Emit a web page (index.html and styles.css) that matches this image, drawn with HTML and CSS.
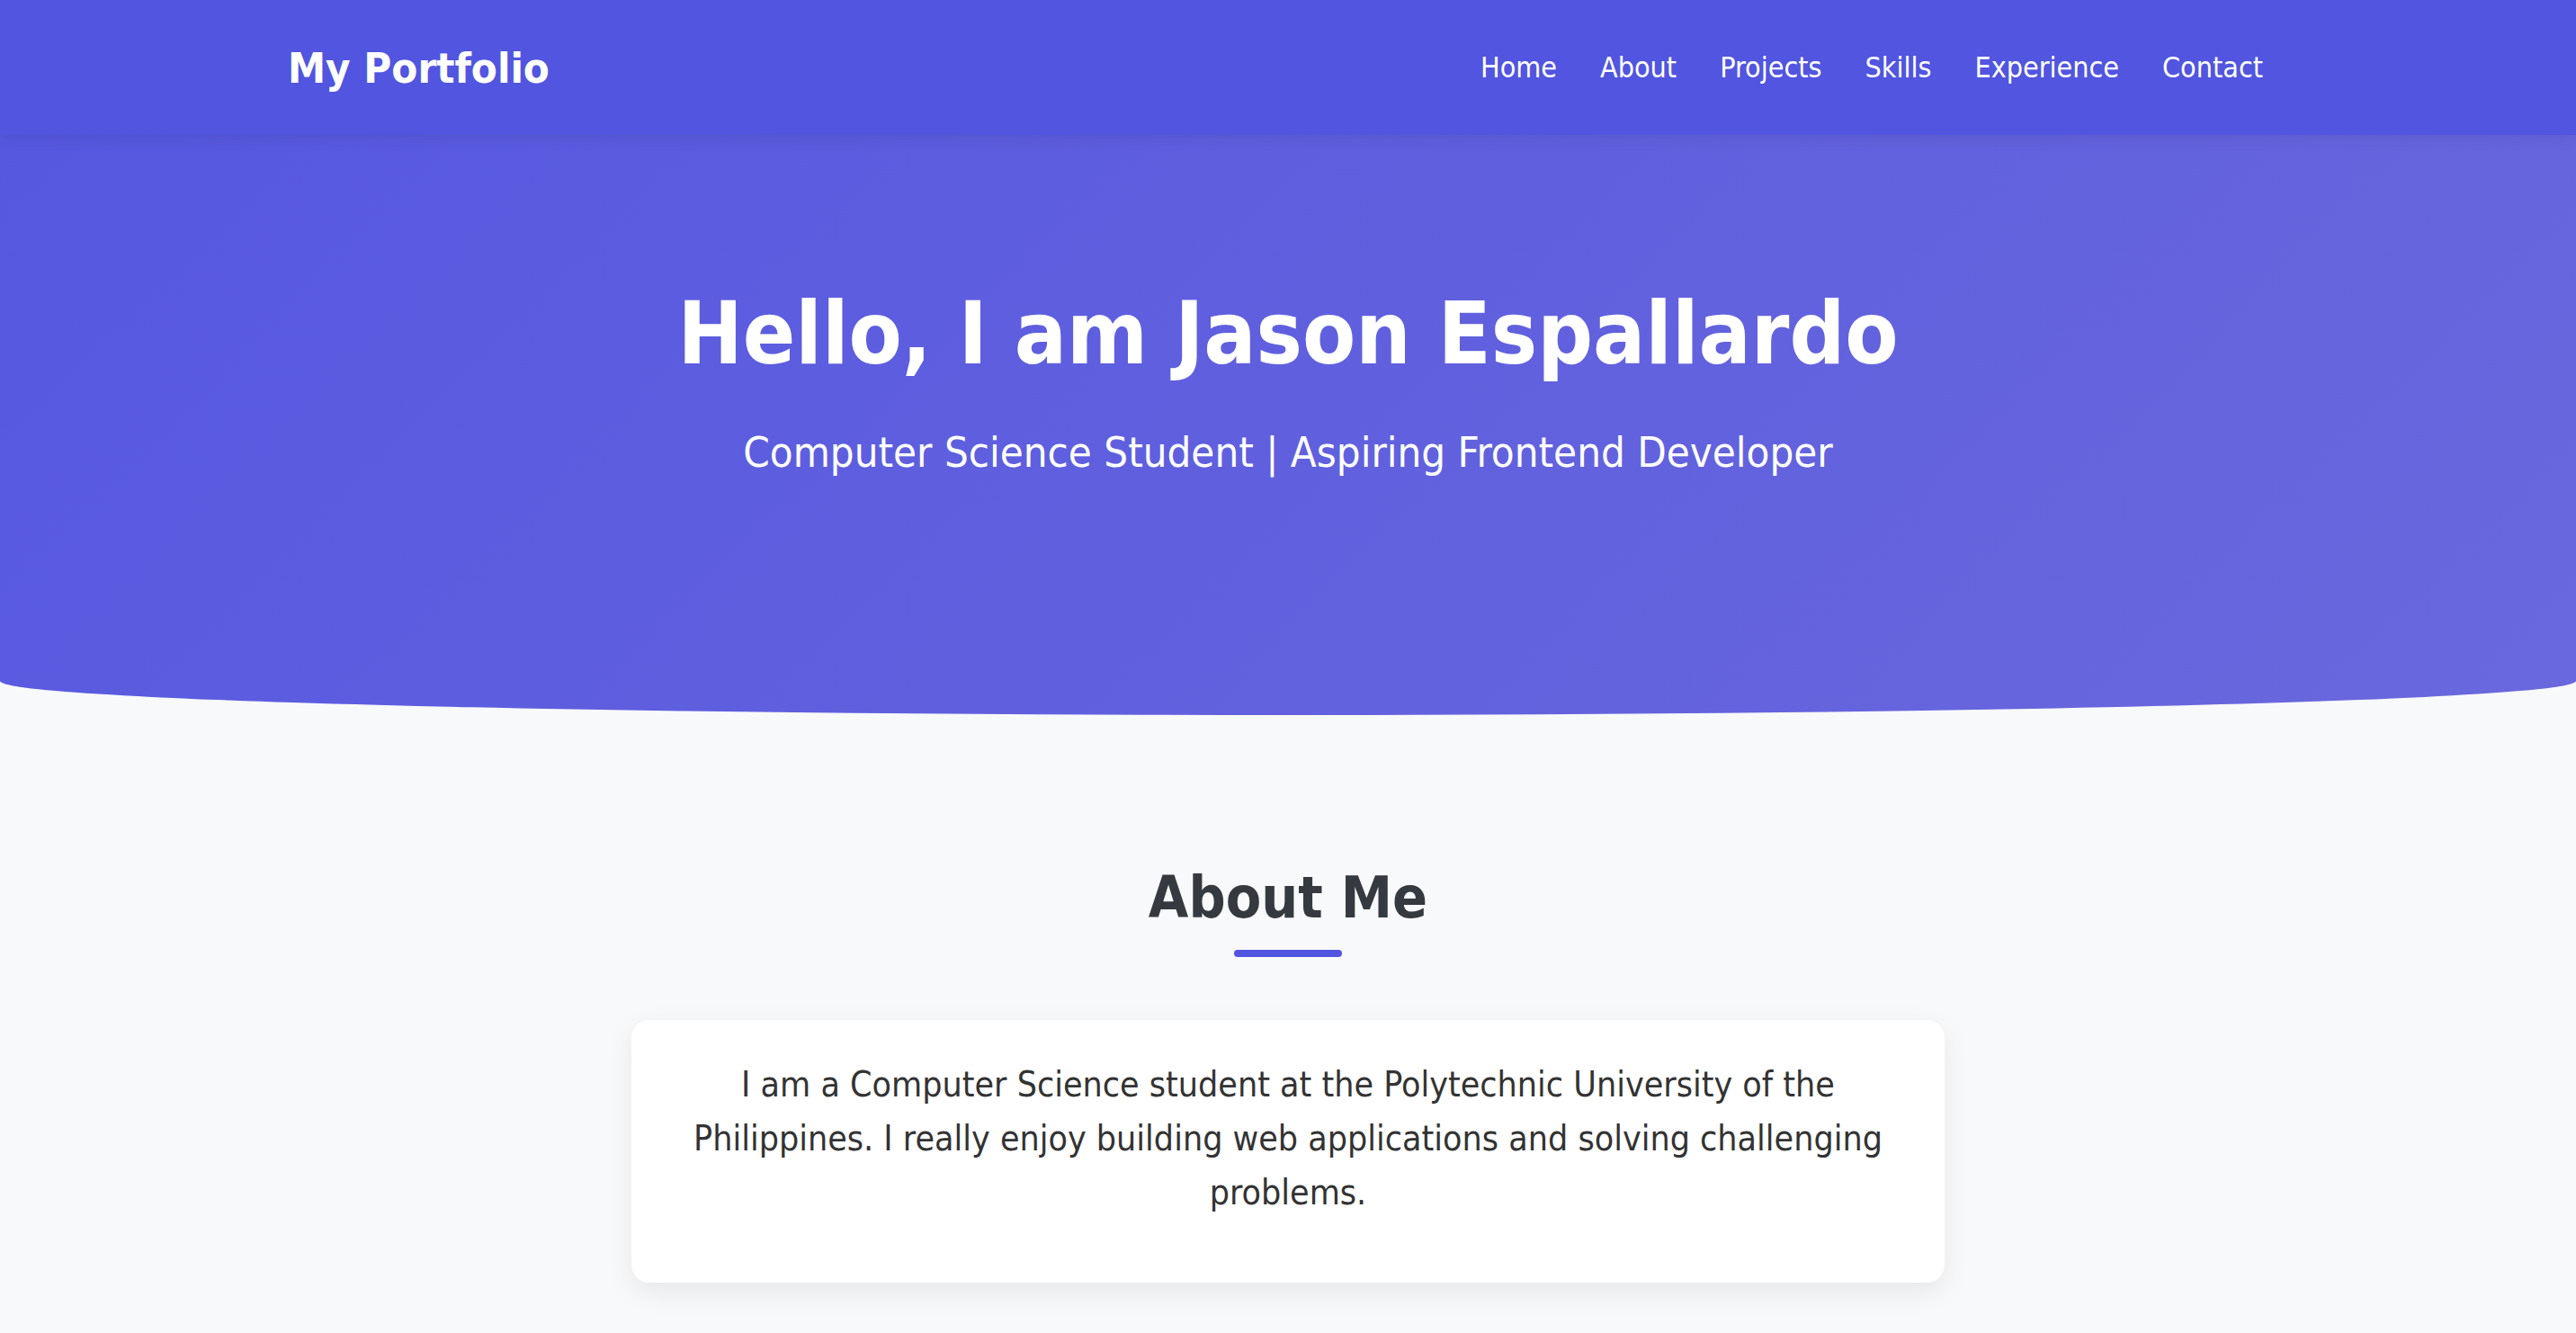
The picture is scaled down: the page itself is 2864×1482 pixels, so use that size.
FILE: index.html
```html
<!DOCTYPE html>
<html lang="en">
<head>
<meta charset="UTF-8">
<title>My Portfolio</title>
<link rel="stylesheet" href="styles.css">
</head>
<body>
<header class="navbar">
  <div class="container nav-inner">
    <a class="logo" href="#">My Portfolio</a>
    <nav class="nav-links">
      <a href="#home">Home</a>
      <a href="#about">About</a>
      <a href="#projects">Projects</a>
      <a href="#skills">Skills</a>
      <a href="#experience">Experience</a>
      <a href="#contact">Contact</a>
    </nav>
  </div>
</header>
<section class="hero" id="home">
  <h1 class="hero-title">Hello, I am Jason Espallardo</h1>
  <p class="hero-subtitle">Computer Science Student | Aspiring Frontend Developer</p>
</section>
<section class="about" id="about">
  <h2 class="section-title">About Me</h2>
  <div class="about-card">
    <p>I am a Computer Science student at the Polytechnic University of the Philippines. I really enjoy building web applications and solving challenging problems.</p>
  </div>
</section>
</body>
</html>
```
FILE: styles.css
```css
* { box-sizing: border-box; }
html, body { margin: 0; padding: 0; }
body {
  font-family: "DejaVu Sans Condensed", "DejaVu Sans", Verdana, sans-serif;
  background: #f8f9fa;
  color: #333;
  min-height: 100vh;
}
.navbar {
  background: #5155df;
  height: 150px;
  box-shadow: 0 4px 16px rgba(0, 0, 0, 0.08);
  position: relative;
  z-index: 2;
}
.container {
  width: 2216px;
  margin: 0 auto;
}
.nav-inner {
  height: 100%;
  display: flex;
  align-items: center;
  justify-content: space-between;
}
.logo {
  color: #fff;
  text-decoration: none;
  font-weight: bold;
  font-size: 47px;
  margin-left: -4px;
}
.nav-links {
  display: flex;
  gap: 48px;
  padding-right: 24px;
}
.nav-links a {
  color: #fff;
  text-decoration: none;
  font-size: 32px;
}
.hero {
  background: linear-gradient(135deg, #5658e0 0%, #6a68dd 100%);
  color: #fff;
  text-align: center;
  padding: 163px 0 263px;
  border-radius: 0 0 50% 50% / 0 0 38px 38px;
}
.hero-title {
  margin: 0;
  font-size: 96px;
  line-height: 116px;
  font-weight: bold;
}
.hero-subtitle {
  margin: 45px 0 0;
  font-size: 47px;
  line-height: 58px;
}
.about {
  padding: 163px 0 60px;
}
.section-title {
  margin: 0 0 70px;
  text-align: center;
  font-size: 64px;
  line-height: 80px;
  color: #343a40;
  font-weight: bold;
}
.section-title::after {
  content: "";
  display: block;
  width: 120px;
  height: 8px;
  margin: 18px auto 0;
  border-radius: 4px;
  background: #5155df;
}
.about-card {
  width: 1460px;
  margin: 0 auto;
  background: #fff;
  border-radius: 20px;
  padding: 42px 54px 70px;
  box-shadow: 0 10px 30px rgba(0, 0, 0, 0.08);
  text-align: center;
}
.about-card p {
  margin: 0;
  font-size: 39px;
  line-height: 60px;
}
```
